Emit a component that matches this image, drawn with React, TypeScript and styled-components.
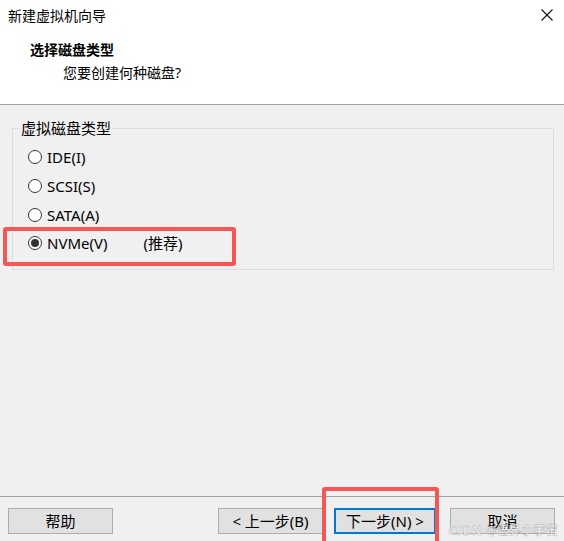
import React from 'react'
import styled, { createGlobalStyle } from 'styled-components'

const GlobalStyle = createGlobalStyle`
  html, body {
    margin: 0;
    padding: 0;
    background: #f0f0f0;
  }
  body {
    font-family: "Noto Sans", "Noto Sans CJK SC", sans-serif;
    font-size: 14px;
    color: #000;
  }
`

const Window = styled.div`
  width: 564px;
  height: 541px;
  display: flex;
  flex-direction: column;
  position: relative;
  overflow: hidden;
  background: #f0f0f0;
`

const Header = styled.div`
  background: #fff;
  height: 104px;
  border-bottom: 1px solid #a0a0a0;
  display: flex;
  flex-direction: column;
`

const TitleBar = styled.div`
  height: 30px;
  display: flex;
  align-items: center;
  justify-content: space-between;
  padding: 0 10px 0 8px;
  font-size: 14px;
`

const CloseIcon = styled.svg`
  width: 14px;
  height: 14px;
`

const HeaderTitle = styled.div`
  margin: 10px 0 0 30px;
  font-weight: bold;
  line-height: 20px;
`

const HeaderSub = styled.div`
  margin: 3px 0 0 63px;
  line-height: 20px;
`

const Body = styled.div`
  flex: 1;
  padding: 14px 10px 0 12px;
  position: relative;
  font-size: 15px;
`

const Group = styled.fieldset`
  margin: 0;
  width: 542px;
  height: 151px;
  box-sizing: border-box;
  border: 1px solid #dcdcdc;
  padding: 6px 0 0 15px;
  display: flex;
  flex-direction: column;
`

const Legend = styled.legend`
  padding: 0 2px;
  margin-left: -9px;
  line-height: 18px;
`

const Option = styled.label`
  display: flex;
  align-items: center;
  gap: 5px;
  height: 28.7px;
  line-height: 20px;
`

const Radio = styled.span<{ checked?: boolean }>`
  width: 14px;
  height: 14px;
  box-sizing: border-box;
  border: 1px solid #333;
  border-radius: 50%;
  background: #fff;
  display: flex;
  align-items: center;
  justify-content: center;
  &::after {
    content: '';
    display: ${({ checked }) => (checked ? 'block' : 'none')};
    width: 8px;
    height: 8px;
    border-radius: 50%;
    background: #333;
  }
`

const Hint = styled.span`
  margin-left: 31px;
`

const Mark = styled.div`
  position: absolute;
  border: 4px solid #f55656;
  border-radius: 3px;
  box-sizing: border-box;
`

const Footer = styled.div`
  height: 45px;
  box-sizing: border-box;
  border-top: 1px solid #a0a0a0;
  display: flex;
  align-items: flex-start;
  padding: 11px 9px 0 8px;
  position: relative;
`

const Button = styled.button<{ primary?: boolean }>`
  width: 105px;
  height: 26px;
  box-sizing: border-box;
  background: #e1e1e1;
  border: ${({ primary }) => (primary ? '2px solid #0078d7' : '1px solid #adadad')};
  font: inherit;
  font-size: 15px;
  color: #000;
  padding: 0;
  line-height: 20px;
`

const Spacer = styled.div`
  flex: 1;
`

const Watermark = styled.div`
  position: absolute;
  right: 6px;
  bottom: 2px;
  font-size: 12px;
  font-weight: bold;
  color: rgba(255, 255, 255, 0.75);
  -webkit-text-stroke: 0.4px rgba(120, 120, 120, 0.7);
  letter-spacing: 0.3px;
`

export default function App() {
  return (
    <Window>
      <GlobalStyle />
      <Header>
        <TitleBar>
          <span>新建虚拟机向导</span>
          <CloseIcon viewBox="0 0 14 14">
            <path d="M1.5 1.5 L12.5 12.5 M12.5 1.5 L1.5 12.5" stroke="#111" strokeWidth="1.1" fill="none" />
          </CloseIcon>
        </TitleBar>
        <HeaderTitle>选择磁盘类型</HeaderTitle>
        <HeaderSub>您要创建何种磁盘?</HeaderSub>
      </Header>
      <Body>
        <Group>
          <Legend>虚拟磁盘类型</Legend>
          <Option><Radio />IDE(I)</Option>
          <Option><Radio />SCSI(S)</Option>
          <Option><Radio />SATA(A)</Option>
          <Option><Radio checked />NVMe(V)<Hint>(推荐)</Hint></Option>
        </Group>
        <Mark style={{ left: 3, top: 122, width: 233, height: 39 }} />
      </Body>
      <Footer>
        <Button>帮助</Button>
        <Spacer />
        <Button>&lt; 上一步(B)</Button>
        <Button primary style={{ marginLeft: 11, width: 102 }}>下一步(N) &gt;</Button>
        <Button style={{ marginLeft: 14 }}>取消</Button>
        <Mark style={{ left: 322, top: -10, width: 117, height: 70 }} />
        <Watermark>CSDN @悟界小宇宙</Watermark>
      </Footer>
    </Window>
  )
}
